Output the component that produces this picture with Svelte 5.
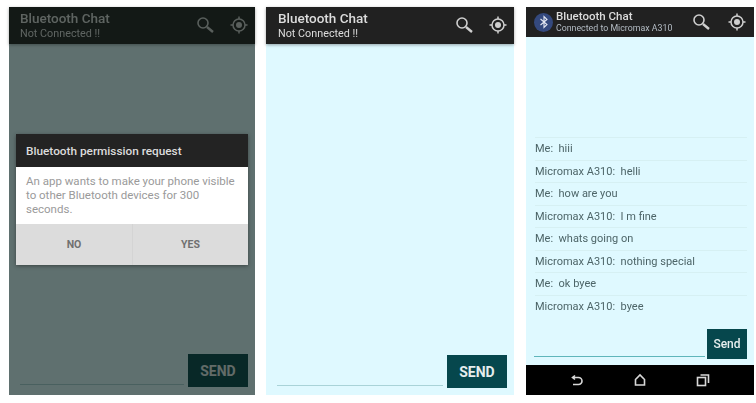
<script lang="ts">
  const messages = [
    "Me:  hiii",
    "Micromax A310:  helli",
    "Me:  how are you",
    "Micromax A310:  I m fine",
    "Me:  whats going on",
    "Micromax A310:  nothing special",
    "Me:  ok byee",
    "Micromax A310:  byee",
  ];
</script>

{#snippet actions()}
  <div class="actions">
    <svg width="20" height="20" viewBox="0 0 20 20" fill="none" stroke="currentColor">
      <circle cx="8" cy="8" r="5" stroke-width="1.6" />
      <path d="M12 12l6 5" stroke-width="2.4" />
    </svg>
    <svg width="20" height="20" viewBox="0 0 20 20" fill="none" stroke="currentColor">
      <circle cx="10" cy="10" r="6" stroke-width="1.5" />
      <circle cx="10" cy="10" r="3" fill="currentColor" stroke="none" />
      <path d="M10 1.500v2.500M10 16v2.500M1.500 10H4M16 10h2.500" stroke-width="1.5" />
    </svg>
  </div>
{/snippet}

<div class="page">
  <section class="screen first">
    <header class="bar">
      <div class="titles">
        <div class="title">Bluetooth Chat</div>
        <div class="subtitle">Not Connected !!</div>
      </div>
      {@render actions()}
    </header>
    <div class="chat"></div>
    <div class="composer">
      <div class="field"></div>
      <button class="send">SEND</button>
    </div>
    <div class="scrim">
      <div class="dialog">
        <div class="dialog-title">Bluetooth permission request</div>
        <div class="dialog-body">An app wants to make your phone visible to other Bluetooth devices for 300 seconds.</div>
        <div class="dialog-buttons">
          <span>NO</span>
          <span>YES</span>
        </div>
      </div>
    </div>
  </section>

  <section class="screen second">
    <header class="bar">
      <div class="titles">
        <div class="title">Bluetooth Chat</div>
        <div class="subtitle">Not Connected !!</div>
      </div>
      {@render actions()}
    </header>
    <div class="chat"></div>
    <div class="composer">
      <div class="field"></div>
      <button class="send">SEND</button>
    </div>
  </section>

  <section class="screen third">
    <header class="bar">
      <div class="logo">
        <svg width="12" height="14" viewBox="0 0 12 14" fill="none" stroke="#e4e8f2" stroke-width="1.1">
          <path d="M2.500 4l6.500 5.500L6 12.500v-11L9 4.500 2.500 10" />
        </svg>
      </div>
      <div class="titles">
        <div class="title">Bluetooth Chat</div>
        <div class="subtitle">Connected to Micromax A310</div>
      </div>
      {@render actions()}
    </header>
    <div class="chat">
      <ul class="messages">
        {#each messages as message}
          <li>{message}</li>
        {/each}
      </ul>
    </div>
    <div class="composer">
      <div class="field"></div>
      <button class="send">Send</button>
    </div>
    <nav class="nav">
      <svg width="16" height="16" viewBox="0 0 16 16" fill="none" stroke="currentColor" stroke-width="1.6">
        <path d="M6 3.500L3.500 5.500 6 7.500M4 5.500h5.500a3.500 3.500 0 0 1 0 7H4" />
      </svg>
      <svg width="16" height="16" viewBox="0 0 16 16" fill="none" stroke="currentColor" stroke-width="1.6">
        <path d="M3.500 13V7.500L8 3l4.500 4.500V13z" />
      </svg>
      <svg width="16" height="16" viewBox="0 0 16 16" fill="none" stroke="currentColor" stroke-width="1.6">
        <rect x="2.500" y="5.500" width="8" height="8" />
        <path d="M5.500 3h8v8" />
      </svg>
    </nav>
  </section>
</div>

<style>
  :global(body) {
    margin: 0;
    background: #fff;
  }

  .page {
    display: flex;
    width: 756px;
    height: 403px;
    box-sizing: border-box;
    padding: 7px 0 8px 9px;
    font-family: Roboto, "Liberation Sans", sans-serif;
    overflow: hidden;
  }

  .screen {
    position: relative;
    display: flex;
    flex-direction: column;
    background: #dff9ff;
    filter: blur(0.5px);
  }

  .first {
    width: 246px;
  }

  .second {
    width: 248px;
    margin-left: 11px;
  }

  .third {
    width: 228px;
    margin-left: 12px;
  }

  .bar {
    display: flex;
    align-items: center;
    flex: none;
    height: 37px;
    padding: 0 6px 0 12px;
    background: #212121;
    color: #dcdcdc;
    box-shadow: 0 1px 3px rgba(0, 0, 0, 0.35);
    z-index: 1;
  }

  .first .bar {
    padding-left: 11px;
  }

  .titles {
    flex: 1;
    min-width: 0;
  }

  .title {
    font-size: 13.5px;
    font-weight: 500;
    line-height: 17px;
  }

  .subtitle {
    font-size: 10.8px;
    line-height: 14px;
  }

  .actions {
    display: flex;
    gap: 14px;
    margin-top: -1px;
    color: #cfcfcf;
  }

  .chat {
    flex: 1;
    min-height: 0;
  }

  .composer {
    display: flex;
    align-items: flex-end;
    flex: none;
    gap: 4px;
    padding: 0 7px 7px 11px;
  }

  .first .composer {
    padding-bottom: 8px;
  }

  .field {
    flex: 1;
    height: 1px;
    margin-bottom: 2px;
    background: #a9d3d8;
  }

  .send {
    flex: none;
    width: 60px;
    height: 33px;
    padding: 0;
    border: 0;
    background: #06474d;
    color: #e6eeee;
    font: 700 14px Roboto, "Liberation Sans", sans-serif;
  }

  .scrim {
    position: absolute;
    inset: 0;
    z-index: 2;
    background: rgba(10, 20, 15, 0.6);
  }

  .dialog {
    position: absolute;
    left: 7px;
    top: 127px;
    width: 232px;
    box-shadow: 0 1px 4px rgba(0, 0, 0, 0.4);
  }

  .dialog-title {
    display: flex;
    align-items: center;
    height: 33px;
    padding-left: 10px;
    background: #232323;
    color: #dcdcdc;
    font-size: 11.8px;
    font-weight: 500;
  }

  .dialog-body {
    height: 57px;
    box-sizing: border-box;
    padding: 7px 10px 0;
    background: #fff;
    color: #9a9a9a;
    font-size: 11.500px;
    line-height: 14px;
  }

  .dialog-buttons {
    display: grid;
    grid-template-columns: 1fr 1fr;
    height: 41px;
    background: #dcdcdc;
    color: #707070;
    font-size: 10.500px;
    font-weight: 700;
  }

  .dialog-buttons span {
    display: flex;
    align-items: center;
    justify-content: center;
  }

  .dialog-buttons span + span {
    border-left: 1px solid #d4d4d4;
  }

  .third .bar {
    height: 30px;
    padding: 0 7px 0 8px;
    box-shadow: none;
  }

  .third .title {
    font-size: 11.500px;
    line-height: 13px;
  }

  .third .subtitle {
    font-size: 8.800px;
    line-height: 11px;
    color: #b4bcc4;
  }

  .third .actions {
    gap: 16px;
    margin-top: 0;
  }

  .logo {
    display: flex;
    align-items: center;
    justify-content: center;
    flex: none;
    width: 19px;
    height: 19px;
    margin-right: 3px;
    border-radius: 50%;
    background: #34497e;
  }

  .chat:has(.messages) {
    display: flex;
    flex-direction: column;
    justify-content: flex-end;
  }

  .messages {
    margin: 0 7px 12px 9px;
    padding: 0;
    list-style: none;
    border-top: 1px solid #d6f0f3;
    color: #4d6568;
    font-size: 11px;
  }

  .messages li {
    height: 21.500px;
    padding-left: 0;
    line-height: 21px;
    border-bottom: 1px solid #d6f0f3;
    white-space: pre;
  }

  .messages li:last-child {
    border-bottom: 0;
  }

  .third .composer {
    gap: 2px;
    padding: 0 7px 6px 8px;
  }

  .third .field {
    height: 1.500px;
    margin-bottom: 2px;
    background: #5fb6bb;
  }

  .third .send {
    width: 40px;
    height: 30px;
    font-size: 12px;
    font-weight: 500;
  }

  .nav {
    display: flex;
    align-items: center;
    justify-content: center;
    gap: 47px;
    flex: none;
    height: 30px;
    background: #000;
    color: #d8d8d8;
  }
</style>
